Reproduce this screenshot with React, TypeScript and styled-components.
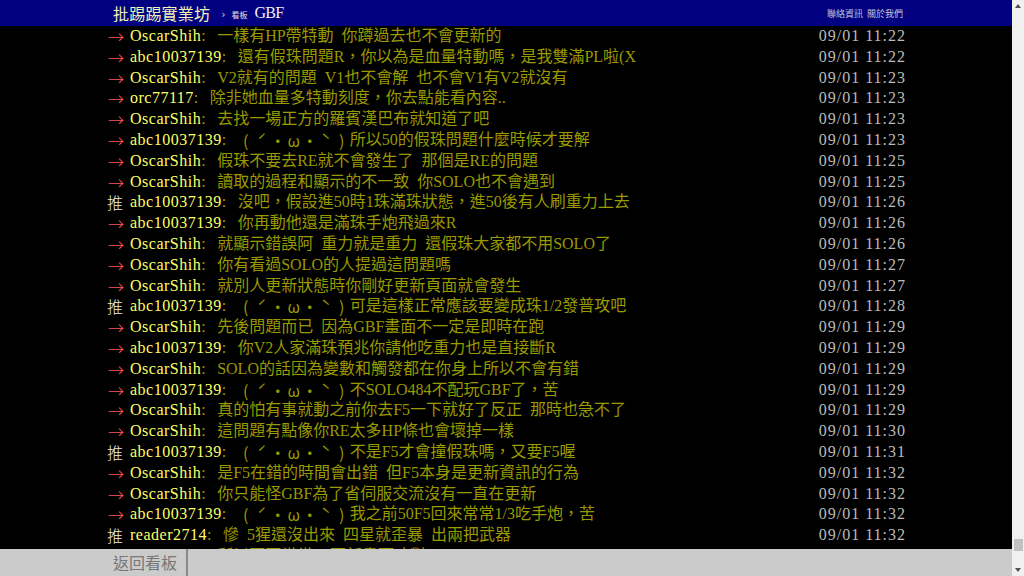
import React from 'react';
import styled, { createGlobalStyle } from 'styled-components';

const GlobalStyle = createGlobalStyle`
	html, body {
		margin: 0;
		padding: 0;
		background: #000;
		overflow: hidden;
	}
`;

const Shell = styled.div`
	display: flex;
	width: 100vw;
	height: 100vh;
	overflow: hidden;
	font-family: 'Liberation Serif', 'Noto Sans CJK TC', serif;
`;

const Page = styled.div`
	flex: 1;
	display: flex;
	flex-direction: column;
	min-width: 0;
	background: #000;
`;

const Topbar = styled.div`
	height: 26px;
	flex: none;
	background: #000080;
	display: flex;
	justify-content: center;
`;

const BarInner = styled.div`
	width: 800px;
	padding: 0 3px 0 7px;
	display: flex;
	align-items: center;
	box-sizing: border-box;
`;

const Logo = styled.span`
	font-family: 'Noto Sans CJK TC', sans-serif;
	font-size: 16px;
	color: #f2f2b4;
	letter-spacing: 0.2px;
`;

const Crumb = styled.span`
	font-family: 'DejaVu Sans', sans-serif;
	font-size: 11px;
	color: #c8c8e0;
	margin: 2px 6px 0 11px;
`;

const BoardLabel = styled.span`
	font-family: 'Noto Sans CJK TC', sans-serif;
	font-size: 8px;
	color: #e0e0e0;
	margin: 2px 7px 0 0;
`;

const BoardName = styled.span`
	font-family: 'Liberation Serif', serif;
	font-size: 16px;
	color: #f0f0f0;
	letter-spacing: -0.8px;
`;

const RightLinks = styled.div`
	margin-left: auto;
	display: flex;
	gap: 4px;
	font-family: 'Noto Sans CJK TC', sans-serif;
	font-size: 9px;
	color: #c4c4dc;
	margin-top: 1px;
`;

const Screen = styled.div`
	flex: 1;
	overflow: hidden;
	display: flex;
	justify-content: center;
`;

const Pushes = styled.div`
	width: 800px;
`;

const Row = styled.div`
	display: flex;
	height: 20.8px;
	line-height: 20.8px;
	font-size: 16px;
	white-space: pre;
`;

const Tag = styled.span<{ $push: boolean }>`
	flex: none;
	width: 24px;
	font-family: 'Noto Sans CJK TC', sans-serif;
	font-weight: 300;
	color: ${({ $push }) => ($push ? '#eee' : '#f55')};
	padding-left: ${({ $push }) => ($push ? '1px' : '2px')};
	box-sizing: border-box;
`;

const UserId = styled.span`
	color: #ff6;
	letter-spacing: 0.5px;
`;

const Colon = styled.span`
	display: inline-block;
	width: 16px;
	color: #990;
`;

const Content = styled.span`
	color: #990;
	word-spacing: 4px;
`;

const Face = styled.span`
	display: inline-flex;
	vertical-align: top;
	font-family: 'Noto Sans CJK TC', sans-serif;
`;

const FaceCell = styled.span`
	display: inline-block;
	width: 16px;
	text-align: center;
`;

const Stamp = styled.span`
	margin-left: auto;
	color: #bbb;
	letter-spacing: 1px;
`;

const Footer = styled.div`
	height: 27px;
	flex: none;
	background: #cbcbcb;
	display: flex;
	justify-content: center;
`;

const FootInner = styled.div`
	width: 800px;
	display: flex;
`;

const BackLink = styled.span`
	font-family: 'Noto Sans CJK TC', sans-serif;
	font-size: 16px;
	color: #777;
	padding: 0 9px 0 7px;
	line-height: 27px;
	border-right: 2px solid #8a8a8a;
`;

const ScrollTrack = styled.div`
	width: 12px;
	flex: none;
	background: #f0f0f0;
	display: flex;
	flex-direction: column;
	align-items: center;
`;

const ArrowBtn = styled.div`
	height: 12px;
	flex: none;
	display: flex;
	align-items: center;
	justify-content: center;
`;

const Thumb = styled.div`
	width: 9px;
	height: 12px;
	margin-top: auto;
	margin-bottom: 13px;
	background: #c1c1c1;
`;

type Push = {
	push?: boolean;
	user: string;
	face?: boolean;
	text: string;
	time: string;
};

const FACE = ['(', 'ˊ', '・', 'ω', '・', 'ˋ', ')'];

const pushes: Push[] = [
	{ user: 'OscarShih', text: '一樣有HP帶特動 你蹲過去也不會更新的', time: '09/01 11:22' },
	{ user: 'abc10037139', text: '還有假珠問題R，你以為是血量特動嗎，是我雙滿PL啦(X', time: '09/01 11:22' },
	{ user: 'OscarShih', text: 'V2就有的問題 V1也不會解 也不會V1有V2就沒有', time: '09/01 11:23' },
	{ user: 'orc77117', text: '除非她血量多特動刻度，你去點能看內容..', time: '09/01 11:23' },
	{ user: 'OscarShih', text: '去找一場正方的羅賓漢巴布就知道了吧', time: '09/01 11:23' },
	{ user: 'abc10037139', face: true, text: '所以50的假珠問題什麼時候才要解', time: '09/01 11:23' },
	{ user: 'OscarShih', text: '假珠不要去RE就不會發生了 那個是RE的問題', time: '09/01 11:25' },
	{ user: 'OscarShih', text: '讀取的過程和顯示的不一致 你SOLO也不會遇到', time: '09/01 11:25' },
	{ push: true, user: 'abc10037139', text: '沒吧，假設進50時1珠滿珠狀態，進50後有人刷重力上去', time: '09/01 11:26' },
	{ user: 'abc10037139', text: '你再動他還是滿珠手炮飛過來R', time: '09/01 11:26' },
	{ user: 'OscarShih', text: '就顯示錯誤阿 重力就是重力 還假珠大家都不用SOLO了', time: '09/01 11:26' },
	{ user: 'OscarShih', text: '你有看過SOLO的人提過這問題嗎', time: '09/01 11:27' },
	{ user: 'OscarShih', text: '就別人更新狀態時你剛好更新頁面就會發生', time: '09/01 11:27' },
	{ push: true, user: 'abc10037139', face: true, text: '可是這樣正常應該要變成珠1/2發普攻吧', time: '09/01 11:28' },
	{ user: 'OscarShih', text: '先後問題而已 因為GBF畫面不一定是即時在跑', time: '09/01 11:29' },
	{ user: 'abc10037139', text: '你V2人家滿珠預兆你請他吃重力也是直接斷R', time: '09/01 11:29' },
	{ user: 'OscarShih', text: 'SOLO的話因為變數和觸發都在你身上所以不會有錯', time: '09/01 11:29' },
	{ user: 'abc10037139', face: true, text: '不SOLO484不配玩GBF了，苦', time: '09/01 11:29' },
	{ user: 'OscarShih', text: '真的怕有事就動之前你去F5一下就好了反正 那時也急不了', time: '09/01 11:29' },
	{ user: 'OscarShih', text: '這問題有點像你RE太多HP條也會壞掉一樣', time: '09/01 11:30' },
	{ push: true, user: 'abc10037139', face: true, text: '不是F5才會撞假珠嗎，又要F5喔', time: '09/01 11:31' },
	{ user: 'OscarShih', text: '是F5在錯的時間會出錯 但F5本身是更新資訊的行為', time: '09/01 11:32' },
	{ user: 'OscarShih', text: '你只能怪GBF為了省伺服交流沒有一直在更新', time: '09/01 11:32' },
	{ user: 'abc10037139', face: true, text: '我之前50F5回來常常1/3吃手炮，苦', time: '09/01 11:32' },
	{ push: true, user: 'reader2714', text: '慘 5猩還沒出來 四星就歪暴 出兩把武器', time: '09/01 11:32' },
	{ user: 'OscarShih', text: '所以更要常常F5更新畫面才對', time: '09/01 11:33' },
];

const Triangle = ({ up }: { up?: boolean }) => (
	<svg width="6" height="4" viewBox="0 0 6 4">
		<path d={up ? 'M0 4 L3 0 L6 4 Z' : 'M0 0 L3 4 L6 0 Z'} fill="#505050" />
	</svg>
);

export default function App() {
	return (
		<Shell>
			<GlobalStyle />
			<Page>
				<Topbar>
					<BarInner>
						<Logo>批踢踢實業坊</Logo>
						<Crumb>›</Crumb>
						<BoardLabel>看板</BoardLabel>
						<BoardName>GBF</BoardName>
						<RightLinks>
							<span>聯絡資訊</span>
							<span>關於我們</span>
						</RightLinks>
					</BarInner>
				</Topbar>
				<Screen>
					<Pushes>
						{pushes.map((p, i) => (
							<Row key={i}>
								<Tag $push={!!p.push}>{p.push ? '推' : '→'}</Tag>
								<UserId>{p.user}</UserId>
								<Colon>:</Colon>
								<Content>
									{p.face && (
										<Face>
											{FACE.map((c, j) => (
												<FaceCell key={j}>{c}</FaceCell>
											))}
										</Face>
									)}
									{p.text}
								</Content>
								<Stamp>{p.time}</Stamp>
							</Row>
						))}
					</Pushes>
				</Screen>
				<Footer>
					<FootInner>
						<BackLink>返回看板</BackLink>
					</FootInner>
				</Footer>
			</Page>
			<ScrollTrack>
				<ArrowBtn>
					<Triangle up />
				</ArrowBtn>
				<Thumb />
				<ArrowBtn>
					<Triangle />
				</ArrowBtn>
			</ScrollTrack>
		</Shell>
	);
}
